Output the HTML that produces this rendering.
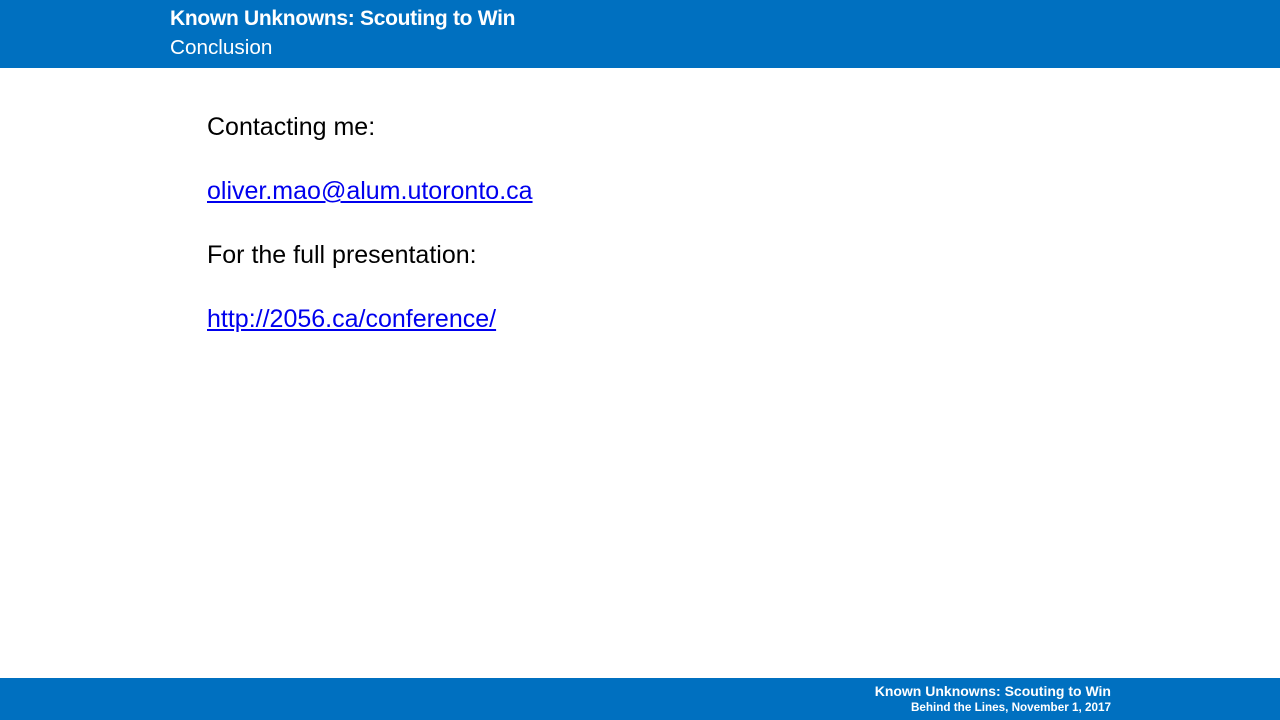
<!DOCTYPE html>
<html><head><style>
body{margin:0;width:1280px;height:720px;position:relative;background:#fff;font-family:"Liberation Sans",sans-serif;overflow:hidden}
.top{position:absolute;left:0;top:0;width:1280px;height:68px;background:#0070c0}
.bot{position:absolute;left:0;top:678px;width:1280px;height:42px;background:#0070c0}
.t1{position:absolute;left:170px;top:7px;color:#fff;font-weight:bold;font-size:21px;white-space:nowrap;letter-spacing:-0.3px}
.t2{position:absolute;left:170px;top:36px;color:#fff;font-size:20.7px;white-space:nowrap}
.b{position:absolute;left:207px;font-size:25px;color:#000;white-space:nowrap}
a{color:#0000ee;text-decoration:underline}
.f1{position:absolute;right:169px;top:683px;color:#fff;font-weight:bold;font-size:14px;white-space:nowrap}
.f2{position:absolute;right:169px;top:701px;color:#fff;font-weight:bold;font-size:11.7px;white-space:nowrap}
</style></head><body>
<div class="top"></div>
<div class="t1">Known Unknowns: Scouting to Win</div>
<div class="t2">Conclusion</div>
<div class="b" style="top:113px">Contacting me:</div>
<div class="b" style="top:177px"><a>oliver.mao@alum.utoronto.ca</a></div>
<div class="b" style="top:241px">For the full presentation:</div>
<div class="b" style="top:305px"><a>http://2056.ca/conference/</a></div>
<div class="bot"></div>
<div class="f1">Known Unknowns: Scouting to Win</div>
<div class="f2">Behind the Lines, November 1, 2017</div>
</body></html>
